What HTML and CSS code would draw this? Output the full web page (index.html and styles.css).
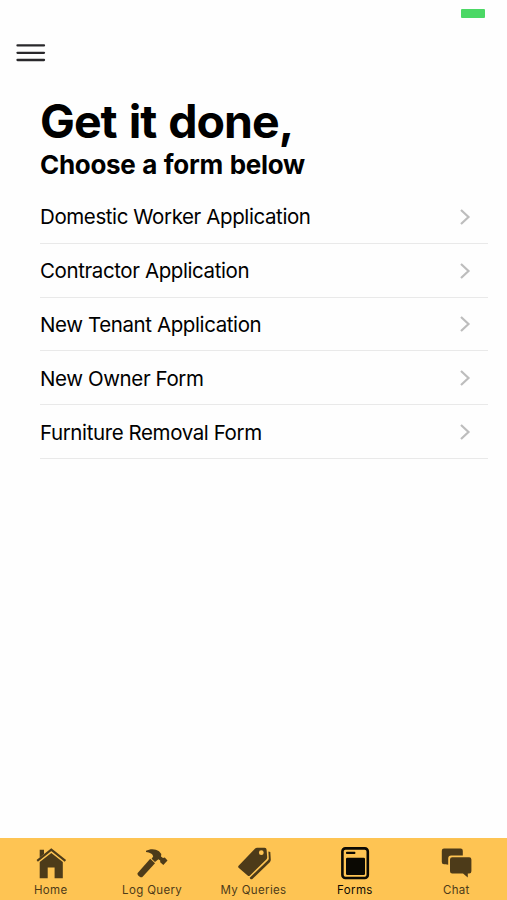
FILE: index.html
```html
<!DOCTYPE html>
<html lang="en">
<head>
  <meta charset="UTF-8">
  <meta name="viewport" content="width=device-width, initial-scale=1.0">
  <title>Forms</title>
  <link rel="stylesheet" href="styles.css">
</head>
<body>
  <!-- Top Bar -->
  <header class="topbar">
    <div class="battery"></div>
    <button class="menu" aria-label="Menu">
      <svg viewBox="0 0 30 20"><path d="M1.5 2.4H28M1.5 9.8H28M1.5 17H28"/></svg>
    </button>
  </header>

  <!-- Form List -->
  <main class="content">
    <h1>Get it done,</h1>
    <h2>Choose a form below</h2>
    <ul class="forms">
      <li><span class="label">Domestic Worker Application</span><svg class="chevron" viewBox="0 0 12 18"><path d="M2 2l7.5 7L2 16"/></svg></li>
      <li><span class="label">Contractor Application</span><svg class="chevron" viewBox="0 0 12 18"><path d="M2 2l7.5 7L2 16"/></svg></li>
      <li><span class="label">New Tenant Application</span><svg class="chevron" viewBox="0 0 12 18"><path d="M2 2l7.5 7L2 16"/></svg></li>
      <li><span class="label">New Owner Form</span><svg class="chevron" viewBox="0 0 12 18"><path d="M2 2l7.5 7L2 16"/></svg></li>
      <li><span class="label">Furniture Removal Form</span><svg class="chevron" viewBox="0 0 12 18"><path d="M2 2l7.5 7L2 16"/></svg></li>
    </ul>
  </main>

  <!-- Tab Bar -->
  <nav class="tabs">
    <a class="tab">
      <svg viewBox="0 0 34 34">
        <path d="M5.7 11.5V3.8H10V8z"/>
        <path d="M5.7 15.9L17.3 6.9 28.8 15.9V32.3H20.6V21.6H13.7V32.3H5.7z"/>
        <path class="roof" d="M3.2 14.9L17.3 3.6 31.4 14.9"/>
      </svg>
      <span>Home</span>
    </a>
    <a class="tab">
      <svg viewBox="0 0 34 34">
        <path d="M11 4.8C15 2.6 20.5 2.5 24 5.3L26.3 8 26 10.4 28 12 29.8 11.5 32.5 14.5 28.3 19 25.2 16.3 25.2 14.5 23.4 13.2 20 16 16.6 12.8 18.2 10.4C17.8 8 15 6.2 11 5.9z"/>
        <path d="M15.2 12.8L20 17.2 7.4 30.9C6 32.4 1.3 28.7 2.7 26.9z"/>
      </svg>
      <span>Log Query</span>
    </a>
    <a class="tab">
      <svg viewBox="0 0 34 34">
        <path fill-rule="evenodd" d="M17.9 2.8Q18.8 1.8 20.2 1.8H27.6Q29.5 1.8 29.6 3.7L30.2 11.3Q30.2 12.5 29.3 13.4L13 29.4Q11.8 30.5 10.6 29.4L1.6 21.8Q.7 20.8 1.6 19.8zM24.3 4.3a2.4 2.4 0 1 0 0 4.8 2.4 2.4 0 0 0 0-4.8z"/>
        <path d="M31.4 5.4L33.3 5.9 33.8 13.8Q33.8 15.2 32.8 16.2L15.4 33Q14.3 33.8 13.2 32.8L12.7 31.8 31.2 14.1Q31.8 13.4 31.8 12.5z"/>
      </svg>
      <span>My Queries</span>
    </a>
    <a class="tab active">
      <svg viewBox="0 0 34 34">
        <rect class="frame" x="4.4" y="2.4" width="25.4" height="29.6" rx="3"/>
        <rect x="8" y="5.8" width="9.4" height="2.2" rx=".8"/>
        <rect x="8" y="11.7" width="19" height="17.2" rx="1.2"/>
      </svg>
      <span>Forms</span>
    </a>
    <a class="tab">
      <svg viewBox="0 0 34 34">
        <path d="M5 2.5H21.6Q23.8 2.5 23.8 4.7V9.5H12.2Q9.2 9.5 9.2 12.5V18.7L6.8 18.3H5Q2.8 18.3 2.8 16.1V4.7Q2.8 2.5 5 2.5z"/>
        <path d="M13.2 11.2H30.2Q32.4 11.2 32.4 13.4V25.3Q32.4 27.5 30.2 27.5H28.8V31.6L24 27.5H13.2Q11 27.5 11 25.3V13.4Q11 11.2 13.2 11.2z"/>
      </svg>
      <span>Chat</span>
    </a>
  </nav>
</body>
</html>
```

FILE: styles.css
```css
/* General Styles */
body {
  margin: 0;
  height: 100vh;
  display: flex;
  flex-direction: column;
  background-color: #fefefe;
  font-family: Inter, "Liberation Sans", sans-serif;
  color: #000;
}

/* Top Bar */
.topbar {
  height: 95px;
  display: flex;
  flex-direction: column;
}

.battery {
  width: 24px;
  height: 9px;
  margin: 9px 22.5px 0 0;
  align-self: flex-end;
  background-color: #4bd865;
  border-radius: 1px;
}

.menu {
  width: 30px;
  margin: 25px 0 0 16px;
  padding: 0;
  border: none;
  background: none;
}

.menu svg {
  display: block;
  width: 30px;
  height: 20px;
  fill: none;
  stroke: #29282b;
  stroke-width: 2.3;
  stroke-linecap: round;
}

/* Form List */
.content {
  flex: 1;
  padding: 0 19px 0 40px;
}

h1 {
  margin: 0;
  font-size: 46.5px;
  line-height: 53px;
  font-weight: 700;
  letter-spacing: -1px;
  word-spacing: 2px;
}

h2 {
  margin: 0;
  font-size: 26px;
  line-height: 33px;
  font-weight: 700;
  letter-spacing: -0.3px;
  word-spacing: 0.9px;
}

.forms {
  list-style: none;
  margin: 9px 0 0;
  padding: 0;
}

.forms li {
  display: flex;
  align-items: center;
  justify-content: space-between;
  height: 51.8px;
  padding: 1px 17px 0 0;
  border-bottom: 1px solid #e9e9e9;
}

.label {
  font-size: 20.5px;
  letter-spacing: -0.4px;
}

.chevron {
  width: 12px;
  height: 18px;
  fill: none;
  stroke: #bdbdbd;
  stroke-width: 2.2;
}

/* Tab Bar */
.tabs {
  display: flex;
  height: 62px;
  background-color: #fec453;
}

.tab {
  flex: 1;
  display: flex;
  flex-direction: column;
  align-items: center;
  padding-top: 8px;
  font-size: 11.5px;
  line-height: 14px;
  letter-spacing: 0.35px;
  color: #4d3b19;
}

.tab svg {
  width: 34px;
  height: 34px;
  margin-bottom: 3px;
  fill: currentColor;
}

.tab .roof {
  fill: none;
  stroke: currentColor;
  stroke-width: 2.2;
}

.tab .frame {
  fill: none;
  stroke: currentColor;
  stroke-width: 2.6;
}

.tab.active {
  color: #0b0903;
}
```
